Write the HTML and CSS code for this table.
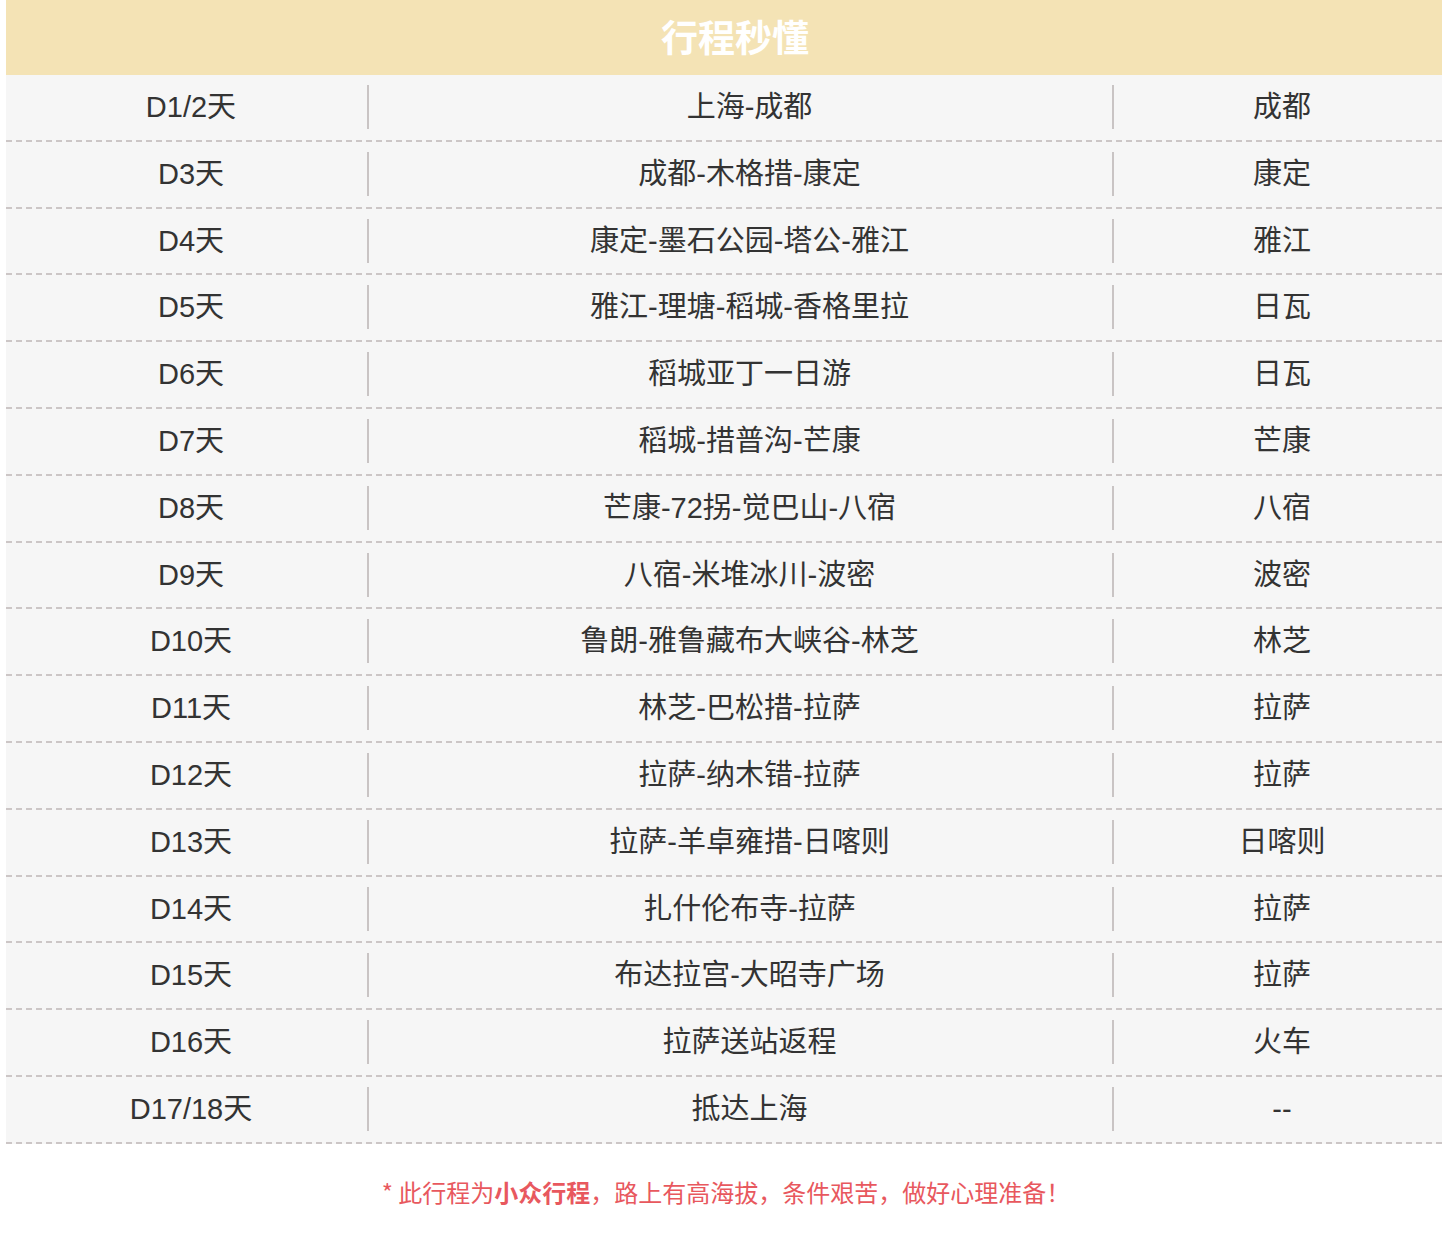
FILE: index.html
```html
<!DOCTYPE html>
<html lang="zh-CN">
<head>
<meta charset="utf-8">
<title>行程秒懂</title>
<link rel="stylesheet" href="styles.css">
</head>
<body>
<div class="panel">
  <div class="title">行程秒懂</div>
  <div class="rows">
    <div class="row"><div class="c day">D1/2天</div><div class="c route">上海-成都</div><div class="c stay">成都</div></div>
    <div class="row"><div class="c day">D3天</div><div class="c route">成都-木格措-康定</div><div class="c stay">康定</div></div>
    <div class="row"><div class="c day">D4天</div><div class="c route">康定-墨石公园-塔公-雅江</div><div class="c stay">雅江</div></div>
    <div class="row"><div class="c day">D5天</div><div class="c route">雅江-理塘-稻城-香格里拉</div><div class="c stay">日瓦</div></div>
    <div class="row"><div class="c day">D6天</div><div class="c route">稻城亚丁一日游</div><div class="c stay">日瓦</div></div>
    <div class="row"><div class="c day">D7天</div><div class="c route">稻城-措普沟-芒康</div><div class="c stay">芒康</div></div>
    <div class="row"><div class="c day">D8天</div><div class="c route">芒康-72拐-觉巴山-八宿</div><div class="c stay">八宿</div></div>
    <div class="row"><div class="c day">D9天</div><div class="c route">八宿-米堆冰川-波密</div><div class="c stay">波密</div></div>
    <div class="row"><div class="c day">D10天</div><div class="c route">鲁朗-雅鲁藏布大峡谷-林芝</div><div class="c stay">林芝</div></div>
    <div class="row"><div class="c day">D11天</div><div class="c route">林芝-巴松措-拉萨</div><div class="c stay">拉萨</div></div>
    <div class="row"><div class="c day">D12天</div><div class="c route">拉萨-纳木错-拉萨</div><div class="c stay">拉萨</div></div>
    <div class="row"><div class="c day">D13天</div><div class="c route">拉萨-羊卓雍措-日喀则</div><div class="c stay">日喀则</div></div>
    <div class="row"><div class="c day">D14天</div><div class="c route">扎什伦布寺-拉萨</div><div class="c stay">拉萨</div></div>
    <div class="row"><div class="c day">D15天</div><div class="c route">布达拉宫-大昭寺广场</div><div class="c stay">拉萨</div></div>
    <div class="row"><div class="c day">D16天</div><div class="c route">拉萨送站返程</div><div class="c stay">火车</div></div>
    <div class="row"><div class="c day">D17/18天</div><div class="c route">抵达上海</div><div class="c stay">--</div></div>
  </div>
  <p class="note">* 此行程为<b>小众行程</b>，路上有高海拔，条件艰苦，做好心理准备！</p>
</div>
</body>
</html>
```

FILE: styles.css
```css
html, body {
  margin: 0;
  padding: 0;
  background: #ffffff;
}
body {
  font-family: "Liberation Sans", "Noto Sans CJK SC", sans-serif;
  color: #333333;
}
.panel {
  margin: 0 11px 0 6px;
}
.title {
  height: 75px;
  line-height: 72px;
  background: #f4e3b5;
  color: #ffffff;
  font-weight: bold;
  font-size: 37px;
  text-align: center;
  padding-left: 22px;
  font-family: "Noto Sans CJK SC", sans-serif;
}
.rows {
  background: #f6f6f6;
}
.row {
  display: grid;
  grid-template-columns: 361px 745px 1fr;
  padding: 10px 0 10.8px;
  border-bottom: 2px dashed #ccc6c6;
}
.c {
  height: 44px;
  line-height: 44px;
  font-size: 29px;
  text-align: center;
  white-space: nowrap;
}
.day {
  padding-left: 9px;
}
.route {
  border-left: 2px solid #c9c4c4;
  padding-left: 18px;
}
.stay {
  border-left: 2px solid #c9c4c4;
  padding-left: 8px;
}
.note {
  margin: 0;
  padding: 33px 0 0 4px;
  line-height: 30px;
  font-size: 24px;
  color: #e8585e;
  text-align: center;
  font-family: "Noto Sans CJK SC", sans-serif;
}
.note b {
  font-weight: bold;
}
```
